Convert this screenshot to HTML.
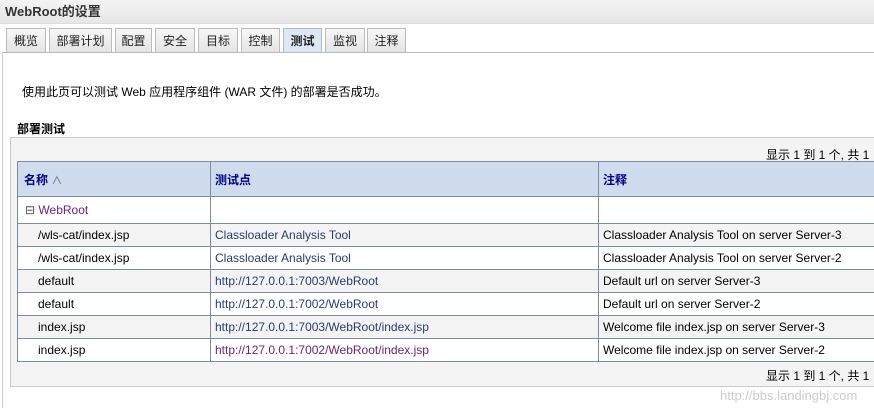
<!DOCTYPE html>
<html><head><meta charset="utf-8"><style>
body{margin:0;width:874px;height:408px;overflow:hidden;background:#fff;font-family:"Liberation Sans","Noto Sans CJK SC",sans-serif;font-size:12px;color:#000;position:relative}
.title{position:absolute;left:0;top:0;width:874px;height:24px;background:linear-gradient(#f4f4f4,#e6e6e6);font-weight:bold;font-size:13px;line-height:24px;padding-left:5px;color:#333;box-sizing:border-box;border-bottom:1px solid #ddd}
.tabline{position:absolute;left:3px;top:52px;width:871px;height:1px;background:#b5bcc7}
.lline{position:absolute;left:2px;top:52px;width:1px;height:356px;background:#ccc}
.tab{position:absolute;top:28px;height:24px;line-height:24px;text-align:center;border:1px solid #bbb;border-bottom:none;background:linear-gradient(#f7f7f7,#e4e4e4);box-sizing:border-box;font-size:12px;color:#222}
.tab.a{background:#dde8f3;font-weight:bold;border-color:#a9bcd3;height:25px}
.txt{position:absolute;left:22px;top:83px}
.h{position:absolute;left:17px;top:120px;font-weight:bold}
.box{position:absolute;left:10px;top:137px;width:870px;height:250px;background:#f4f4f4;border:1px solid #ccc;box-sizing:border-box}
.pg{position:absolute;font-size:12px;white-space:nowrap}
table{position:absolute;left:17px;top:161px;border-collapse:collapse;width:870px}
td,th{border:1px solid #7d8ba3;padding:0 0 0 4px;text-align:left;height:22px;font-size:12px}
th{background:#cedcee;height:34px;color:#00008b}
td:nth-child(1){padding-left:20px}
a{color:#2a3a7a;text-decoration:none}
.v{color:#6b2577}
tr.g td{background:#f4f4f4}
tr.w td{background:#fff}
</style></head><body>
<div class="title">WebRoot的设置</div>
<div class="tab" style="left:6px;width:40px">概览</div>
<div class="tab" style="left:49px;width:63px">部署计划</div>
<div class="tab" style="left:115px;width:37px">配置</div>
<div class="tab" style="left:155px;width:40px">安全</div>
<div class="tab" style="left:198px;width:40px">目标</div>
<div class="tab" style="left:241px;width:39px">控制</div>
<div class="tab a" style="left:283px;width:39px">测试</div>
<div class="tab" style="left:325px;width:40px">监视</div>
<div class="tab" style="left:367px;width:39px">注释</div>
<div class="tabline"></div><div class="lline"></div>
<div class="txt">使用此页可以测试 Web 应用程序组件 (WAR 文件) 的部署是否成功。</div>
<div class="h">部署测试</div>
<div class="box">
<div class="pg" style="top:8px;left:755px">显示 1 到 1 个, 共 1</div>
<div class="pg" style="top:229px;left:755px">显示 1 到 1 个, 共 1</div>
</div>
<table>
<tr><th style="width:186px;padding-left:6px">名称 <span style="color:#889;font-size:11px">&#x2227;</span></th><th style="width:383px">测试点</th><th>注释</th></tr>
<tr class="w"><td style="padding-left:7px;height:26px"><span style="color:#555">&#x229F;</span> <span class="v">WebRoot</span></td><td></td><td></td></tr>
<tr class="g"><td>/wls-cat/index.jsp</td><td><a>Classloader Analysis Tool</a></td><td>Classloader Analysis Tool on server Server-3</td></tr>
<tr class="w"><td>/wls-cat/index.jsp</td><td><a>Classloader Analysis Tool</a></td><td>Classloader Analysis Tool on server Server-2</td></tr>
<tr class="g"><td>default</td><td><a>http://127.0.0.1:7003/WebRoot</a></td><td>Default url on server Server-3</td></tr>
<tr class="w"><td>default</td><td><a>http://127.0.0.1:7002/WebRoot</a></td><td>Default url on server Server-2</td></tr>
<tr class="g"><td>index.jsp</td><td><a>http://127.0.0.1:7003/WebRoot/index.jsp</a></td><td>Welcome file index.jsp on server Server-3</td></tr>
<tr class="w"><td>index.jsp</td><td><a class="v">http://127.0.0.1:7002/WebRoot/index.jsp</a></td><td>Welcome file index.jsp on server Server-2</td></tr>
</table>
<div style="position:absolute;left:720px;top:388px;color:#ccc;font-size:13px">http://bbs.landingbj.com</div>
</body></html>
